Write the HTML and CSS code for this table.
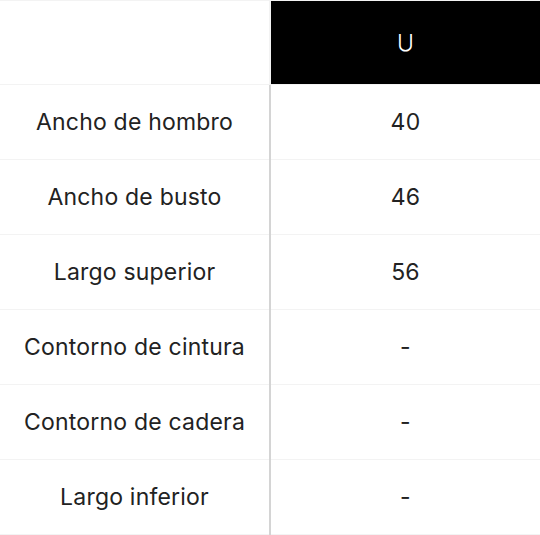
FILE: index.html
```html
<!DOCTYPE html>
<html>
<head>
<meta charset="utf-8">
<link rel="stylesheet" href="styles.css">
</head>
<body>
<table class="size-table">
  <thead>
    <tr><th class="label-head"></th><th class="size-head">U</th></tr>
  </thead>
  <tbody>
    <tr><td class="label">Ancho de hombro</td><td class="value">40</td></tr>
    <tr><td class="label">Ancho de busto</td><td class="value">46</td></tr>
    <tr><td class="label">Largo superior</td><td class="value">56</td></tr>
    <tr><td class="label">Contorno de cintura</td><td class="value">-</td></tr>
    <tr><td class="label">Contorno de cadera</td><td class="value">-</td></tr>
    <tr><td class="label">Largo inferior</td><td class="value">-</td></tr>
  </tbody>
</table>
</body>
</html>
```
FILE: styles.css
```css
html, body {
  margin: 0;
  padding: 0;
  background: #fff;
}
.size-table {
  width: 540px;
  border-collapse: collapse;
  table-layout: fixed;
  font-family: Inter, "DejaVu Sans", sans-serif;
  font-size: 23px;
  letter-spacing: 0.2px;
  color: #222;
}
.size-table th, .size-table td {
  text-align: center;
  padding: 0;
  border-top: 1px solid #f3f3f3;
  border-bottom: 1px solid #f3f3f3;
}
.label-head, .label {
  width: 269px;
  border-right: 2px solid #d4d4d4;
}
.label-head {
  border-right-color: #f3f3f3;
}
th {
  height: 83px;
  font-weight: 300;
}
.size-head {
  background: #000;
  color: #fff;
}
td {
  height: 74px;
}
```
